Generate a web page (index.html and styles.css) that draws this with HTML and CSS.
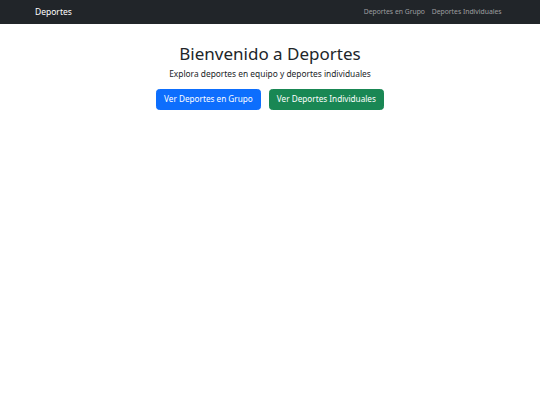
FILE: index.html
```html
<!DOCTYPE html>
<html lang="es">
<head>
<meta charset="utf-8">
<title>Deportes</title>
<link rel="stylesheet" href="styles.css">
</head>
<body>
<nav class="navbar">
  <div class="container nav-inner">
    <a class="brand" href="#">Deportes</a>
    <ul class="nav-links">
      <li><a href="#">Deportes en Grupo</a></li>
      <li><a href="#">Deportes Individuales</a></li>
    </ul>
  </div>
</nav>
<main class="container hero">
  <h1 class="title">Bienvenido a Deportes</h1>
  <p class="lead">Explora deportes en equipo y deportes individuales</p>
  <div class="actions">
    <a class="btn btn-primary" href="#">Ver Deportes en Grupo</a>
    <a class="btn btn-success" href="#">Ver Deportes Individuales</a>
  </div>
</main>
</body>
</html>
```
FILE: styles.css
```css
* { box-sizing: border-box; }
html, body { margin: 0; padding: 0; }
body {
  font-family: "Noto Sans", "Liberation Sans", sans-serif;
  font-size: 6.8px;
  line-height: 1.5;
  color: #212529;
  background: #fff;
}
.container {
  max-width: 470px;
  margin: 0 auto;
  padding: 0;
}
.navbar {
  background: #212529;
  padding: 3.4px 0;
}
.nav-inner {
  display: flex;
  align-items: center;
  justify-content: space-between;
}
.brand {
  color: #fff;
  text-decoration: none;
  font-size: 8.5px;
  line-height: 1.5;
  padding: 1.7px 0;
}
.nav-links {
  list-style: none;
  display: flex;
  margin: 0;
  padding: 0;
}
.nav-links a {
  display: block;
  color: rgba(255,255,255,0.55);
  text-decoration: none;
  padding: 3.4px 3.4px;
}
.hero {
  text-align: center;
  margin-top: 20px;
}
.title {
  font-size: 17px;
  font-weight: 400;
  line-height: 1.2;
  margin: 0 0 3.4px;
}
.lead {
  font-size: 8.4px;
  font-weight: 400;
  margin: 0 0 8.8px;
}
.actions {
  display: flex;
  justify-content: center;
  gap: 8.5px;
}
.btn {
  display: inline-block;
  font-size: 8.2px;
  line-height: 1.5;
  padding: 3.5px 6.8px;
  border: 0.425px solid transparent;
  border-radius: 3.4px;
  color: #fff;
  text-decoration: none;
}
.btn-primary { background: #0d6efd; border-color: #0d6efd; }
.btn-success { background: #198754; border-color: #198754; }
```
